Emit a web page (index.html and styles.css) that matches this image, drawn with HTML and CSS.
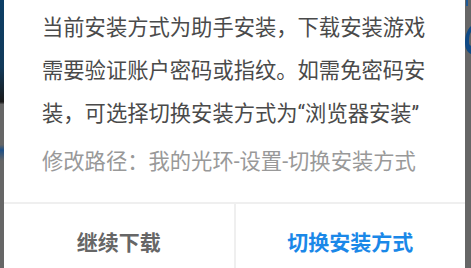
FILE: index.html
```html
<!doctype html>
<html lang="zh-CN">
<head>
    <meta charset="UTF-8">
    <meta name="viewport" content="width=device-width, initial-scale=1.0">
    <title>切换安装方式</title>
    <link rel="stylesheet" href="styles.css">
</head>
<body>
    <div class="screen">
        <div class="edge edge-left"></div>
        <div class="dialog">
            <div class="dialog-body">
                <p class="dialog-msg">当前安装方式为助手安装，下载安装游戏需要验证账户密码或指纹。如需免密码安装，可选择切换安装方式为“浏览器安装”</p>
                <p class="dialog-tip">修改路径：我的光环-设置-切换安装方式</p>
            </div>
            <div class="dialog-btns">
                <div class="dialog-btn btn-cancel">继续下载</div>
                <div class="dialog-btn btn-ok">切换安装方式</div>
            </div>
        </div>
        <div class="edge edge-right">
            <svg class="edge-mark" width="6" height="60" viewBox="0 0 6 60">
                <rect x="1" y="0" width="2" height="6" fill="#1d5a96"/>
                <path d="M6 26 C2 30 0 36 0 42 C0 48 2 52 6 54 L6 46 C4 45 4 43 4 41 C4 36 5 33 6 32 Z" fill="#0f4a86"/>
            </svg>
        </div>
    </div>
</body>
</html>
```

FILE: styles.css
```css
*{margin: 0; padding: 0; box-sizing: border-box;}
html, body{width: 100%; height: 100%; overflow: hidden;}
body{background: #636363; font-family: Roboto, "Noto Sans CJK SC", sans-serif;}
.screen{display: flex; height: 100%;}
.edge{flex: none; overflow: hidden;}
.edge-left{width: 4px; background: linear-gradient(#0d3f66 0%, #123a5a 25%, #1a1a1a 38%, #666 39%, #666 54%, #1d4f86 56%, #666 60%, #666 100%);}
.edge-right{width: 6px; background: #666;}
.edge-mark{display: block;}
.dialog{flex: 1; background: #fff; display: flex; flex-direction: column;}
.dialog-body{padding: 6px 20px 0 38px; height: 202px;}
.dialog-msg{font-size: 21.3px; line-height: 43px; color: #4a4a4a;}
.dialog-tip{font-size: 21.3px; line-height: 43px; color: #999; margin-top: 5px;}
.dialog-btns{display: flex; border-top: 2px solid #efefef; flex: 1;}
.dialog-btn{flex: 1; text-align: center; font-size: 21px; font-weight: bold; padding-top: 22px;}
.btn-cancel{color: #666; border-right: 2px solid #efefef;}
.btn-ok{color: #1a88e8;}
```
